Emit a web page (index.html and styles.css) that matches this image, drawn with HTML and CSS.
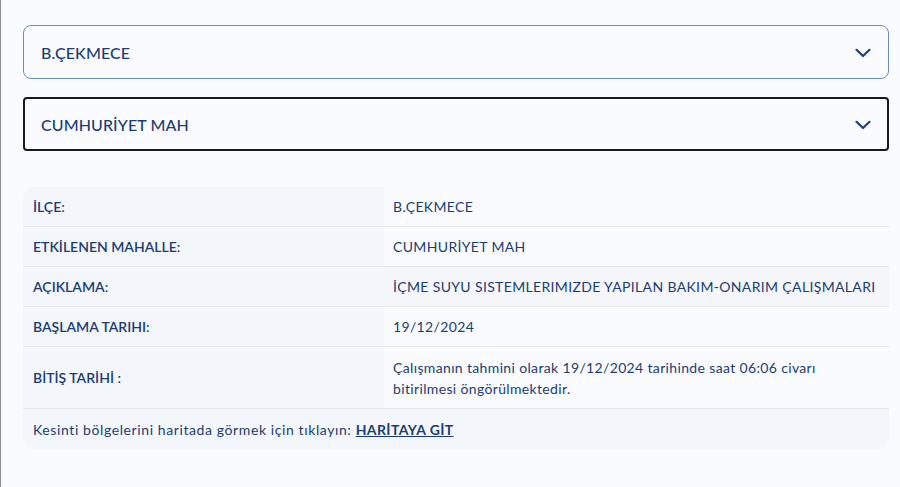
FILE: index.html
```html
<!DOCTYPE html>
<html lang="tr">
<head>
<meta charset="UTF-8">
<title>Kesinti bilgisi</title>
<link rel="stylesheet" href="styles.css">
</head>
<body>
<div class="page">

<div class="selectBox selIlce">
<span class="selText">B.ÇEKMECE</span>
<svg class="chev" width="16" height="10" viewBox="0 0 16 10"><path d="M1.5 1.8 L8 8 L14.5 1.8" fill="none" stroke="#1b3f7a" stroke-width="2.2" stroke-linecap="round" stroke-linejoin="round"/></svg>
</div>

<div class="selectBox selMah">
<span class="selText">CUMHURİYET MAH</span>
<svg class="chev" width="16" height="10" viewBox="0 0 16 10"><path d="M1.5 1.8 L8 8 L14.5 1.8" fill="none" stroke="#1b3f7a" stroke-width="2.2" stroke-linecap="round" stroke-linejoin="round"/></svg>
</div>

<div class="infoTable">
<div class="row">
<div class="lbl">İLÇE:</div>
<div class="val">B.ÇEKMECE</div>
</div>
<div class="row">
<div class="lbl">ETKİLENEN MAHALLE:</div>
<div class="val">CUMHURİYET MAH</div>
</div>
<div class="row">
<div class="lbl">AÇIKLAMA:</div>
<div class="val shade">İÇME SUYU SISTEMLERIMIZDE YAPILAN BAKIM-ONARIM ÇALIŞMALARI</div>
</div>
<div class="row">
<div class="lbl">BAŞLAMA TARIHI:</div>
<div class="val">19/12/2024</div>
</div>
<div class="row">
<div class="lbl">BİTİŞ TARİHİ :</div>
<div class="val tall"><span>Çalışmanın tahmini olarak 19/12/2024 tarihinde saat 06:06 civarı<br>bitirilmesi öngörülmektedir.</span></div>
</div>
<div class="mapRow">
<span>Kesinti bölgelerini haritada görmek için tıklayın: <a href="#" class="mapLink">HARİTAYA GİT</a></span>
</div>
</div>

</div>
</body>
</html>
```

FILE: styles.css
```css
html, body{
margin: 0;
height: 100%;
}

body{
background: #f9fbfe;
border-left: 1px solid #8c8c8c;
box-sizing: border-box;
font-family: Lato, "Open Sans", sans-serif;
color: #1c3c72;
}

.page{
padding: 25px 11px 0 22px;
}

.selectBox{
display: flex;
align-items: center;
justify-content: space-between;
height: 54px;
box-sizing: border-box;
padding: 0 17px 0 17px;
background: #f9fbfe;
}

.selIlce{
border: 1px solid #6b8cc2;
border-radius: 8px;
margin-bottom: 18px;
}

.selMah{
border: 2px solid #1a1a1a;
border-radius: 4px;
padding-left: 16px;
padding-right: 16px;
}

.selText{
font-size: 16px;
font-weight: 500;
letter-spacing: 0.1px;
}

.chev{
display: block;
margin-top: 1px;
}

.infoTable{
margin-top: 36px;
border-radius: 12px;
overflow: hidden;
font-size: 14px;
}

.row{
display: grid;
grid-template-columns: 361px 1fr;
border-bottom: 1px solid #e4e8ee;
}

.lbl, .val{
display: flex;
align-items: center;
min-height: 39px;
}

.lbl{
background: #f3f6fb;
padding-left: 10px;
font-weight: 600;
}

.val{
padding-left: 9px;
background: #f9fbfe;
letter-spacing: 0.35px;
}

.val.shade{
background: #f4f6fa;
}

.val.tall{
min-height: 61px;
line-height: 21px;
}

.mapRow{
background: #f3f6fb;
height: 40px;
display: flex;
align-items: center;
padding-left: 10px;
letter-spacing: 0.6px;
}

.mapLink{
color: #1c3c72;
font-weight: 700;
text-decoration: underline;
letter-spacing: 0.4px;
}
```
